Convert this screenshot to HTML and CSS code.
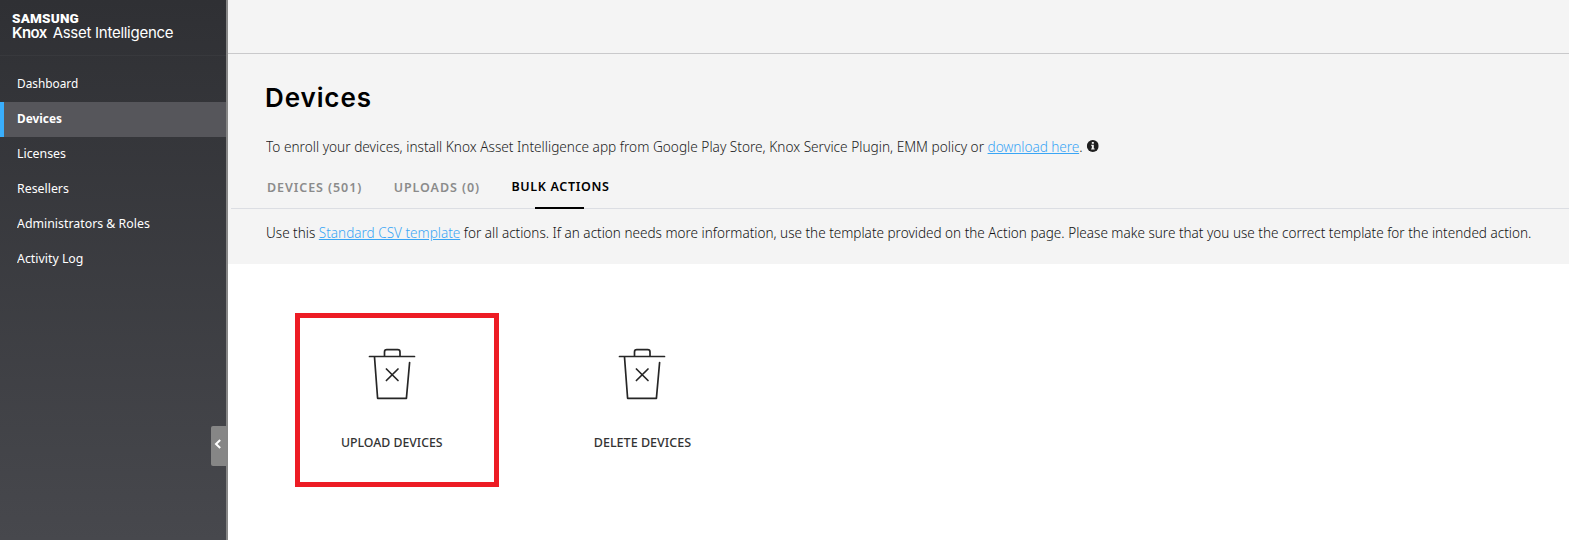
FILE: index.html
```html
<!DOCTYPE html>
<html lang="en">
<head>
<meta charset="utf-8">
<title>Devices</title>
<link rel="stylesheet" href="styles.css">
</head>
<body>
<div class="app">
  <aside class="sidebar">
    <div class="brand">
      <div class="brand-top">SAMSUNG</div>
      <div class="brand-name"><b>Knox</b> <span class="brand-product">Asset Intelligence</span></div>
    </div>
    <nav class="nav">
      <a class="nav-item"><span class="tight">Dashboard</span></a>
      <a class="nav-item active"><span class="tight">Devices</span></a>
      <a class="nav-item"><span>Licenses</span></a>
      <a class="nav-item"><span>Resellers</span></a>
      <a class="nav-item"><span>Administrators &amp; Roles</span></a>
      <a class="nav-item"><span>Activity Log</span></a>
    </nav>
    <button class="collapse" aria-label="Collapse">
      <svg width="8" height="10" viewBox="0 0 8 10"><path d="M6.200 1 2 5l4.200 4" fill="none" stroke="#fff" stroke-width="2"/></svg>
    </button>
  </aside>
  <main class="main">
    <header class="topbar"></header>
    <section class="head">
      <h1 class="title">Devices</h1>
      <p class="intro">To enroll your devices, install Knox Asset Intelligence app from Google Play Store, Knox Service Plugin, EMM policy or <a class="link">download here</a>.
        <svg class="info" viewBox="0 0 12 12" preserveAspectRatio="none"><circle cx="6" cy="6" r="6" fill="#1f1f1f"/><path d="M5 2h2v1.700H5zM4.300 4.800H7V8.500h.8V9.600H4.300V8.500H5V5.800h-.7z" fill="#f4f4f4"/></svg>
      </p>
      <div class="tabs">
        <a class="tab">DEVICES (501)</a>
        <a class="tab">UPLOADS (0)</a>
        <a class="tab current">BULK ACTIONS</a>
      </div>
      <p class="hint">Use this <a class="link">Standard CSV template</a> for all actions. If an action needs more information, use the template provided on the Action page. Please make sure that you use the correct template for the intended action.</p>
    </section>
    <section class="actions">
      <div class="card selected">
        <svg class="bin" width="64" height="66" viewBox="0 0 64 66"><path d="M9.500 16.500H54.500M24.500 16V12q0-2.300 2.300-2.300H37.700Q40 9.700 40 12V16M14.500 17 17.600 58.300H46.400L49.600 22.500M26.400 29 38 40.500M38 29 26.400 40.500"/></svg>
        <span class="label">UPLOAD DEVICES</span>
      </div>
      <div class="card">
        <svg class="bin" width="64" height="66" viewBox="0 0 64 66"><path d="M9.500 16.500H54.500M24.500 16V12q0-2.300 2.300-2.300H37.700Q40 9.700 40 12V16M14.500 17 17.600 58.300H46.400L49.600 22.500M26.400 29 38 40.500M38 29 26.400 40.500"/></svg>
        <span class="label wide">DELETE DEVICES</span>
      </div>
    </section>
  </main>
</div>
</body>
</html>
```
FILE: styles.css
```css
* { box-sizing: border-box; }
body { margin: 0; background: #fff; font-family: "Noto Sans", "Open Sans", sans-serif; }
.app { display: flex; width: 1569px; height: 540px; overflow: hidden; }
.sidebar { position: relative; width: 228px; flex: none; color: #fff; border-right: 2px solid #868686; background: linear-gradient(#2f3034, #47484d); }
.brand { height: 56px; padding: 12px 0 0 12px; border-bottom: 1px solid #38393d; }
.brand-top { font: 900 13.500px/12px Roboto, sans-serif; letter-spacing: .2px; }
.brand-name { font: 400 15px/18px Inter, sans-serif; white-space: nowrap; letter-spacing: -.27px; }
.brand-name b { font-weight: 600; letter-spacing: -.6px; margin-right: 2px; }
.nav { padding-top: 11px; }
.nav-item { display: flex; align-items: center; height: 35px; padding: 0 0 3px 17px; font-size: 13px; }
.nav-item span { transform: scaleX(.95); transform-origin: left; }
.nav-item .tight { transform: scaleX(.91); }
.nav-item.active { background: #56565b; border-left: 4px solid #39aefc; padding-left: 13px; font-weight: 700; }
.collapse { position: absolute; left: 211px; top: 426px; width: 16px; height: 40px; padding: 0 2px 4px 0; border: 0; border-radius: 2px 0 0 2px; background: #868686; display: flex; align-items: center; justify-content: center; }
.main { flex: 1; min-width: 0; }
.topbar { height: 54px; background: #f4f4f4; border-bottom: 1px solid #c9c9cb; }
.head { height: 210px; background: #f4f4f4; color: #222; }
.title { height: 60px; margin: 0; padding: 27px 0 0 37px; font: 600 26px/33px Inter, sans-serif; color: #000; letter-spacing: .9px; }
.intro, .hint { width: max-content; margin: 0 0 0 38px; font: 300 15px/20px "Noto Sans", sans-serif; white-space: nowrap; transform-origin: left; }
.intro { padding-top: 22px; height: 57px; transform: scaleX(.91); }
.intro .link { letter-spacing: -.1px; }
.info { width: 13.2px; height: 12px; margin-left: 1px; vertical-align: 0; }
.link { color: #39a5f5; text-decoration: underline; }
.tabs { display: flex; height: 38px; margin-left: 3px; padding-left: 36px; gap: 31.500px; border-bottom: 1px solid #dcdee3; }
.tab { font-size: 12.500px; font-weight: 600; color: #8b8b8b; letter-spacing: .92px; line-height: 34px; }
.current { position: relative; color: #000; line-height: 32px; letter-spacing: .65px; }
.current::after { content: ""; position: absolute; left: 24px; top: 36px; width: 49px; height: 2px; background: #000; }
.hint { padding-top: 13px; color: #111; transform: scaleX(.9028); }
.actions { display: flex; padding: 49px 0 0 67px; gap: 46px; }
.card { width: 204px; height: 174px; border: 5px solid transparent; padding: 22px 10px 0 0; display: flex; flex-direction: column; align-items: center; }
.selected { border-color: #ed1c24; }
.bin path { fill: none; stroke: #262626; stroke-width: 1.7; stroke-linecap: round; stroke-linejoin: round; }
.label { margin-top: 26px; font-size: 13px; line-height: 20px; font-weight: 500; color: #333; transform: scaleX(.945); }
.wide { transform: scaleX(.965); }
```
